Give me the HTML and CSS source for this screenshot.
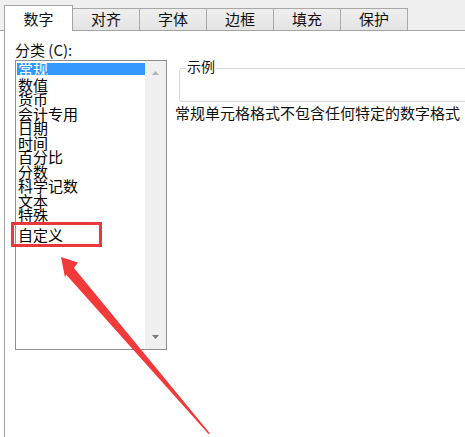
FILE: index.html
```html
<!DOCTYPE html>
<html lang="zh-CN">
<head>
<meta charset="utf-8">
<title>设置单元格格式</title>
<link rel="stylesheet" href="styles.css">
</head>
<body>
<div class="window">
  <div class="tabbar">
    <div class="tab active">数字</div>
    <div class="tab">对齐</div>
    <div class="tab">字体</div>
    <div class="tab">边框</div>
    <div class="tab">填充</div>
    <div class="tab">保护</div>
  </div>
  <div class="panel">
    <div class="left">
      <div class="label">分类 (C):</div>
      <div class="listbox">
        <ul class="items">
          <li class="sel">常规</li>
          <li>数值</li>
          <li>货币</li>
          <li>会计专用</li>
          <li>日期</li>
          <li>时间</li>
          <li>百分比</li>
          <li>分数</li>
          <li>科学记数</li>
          <li>文本</li>
          <li>特殊</li>
          <li class="last">自定义</li>
        </ul>
        <div class="scrollbar">
          <div class="sb-btn"><svg width="7" height="4" viewBox="0 0 7 4"><path d="M0 4 L3.5 0 L7 4 Z" fill="#b4b4b4"/></svg></div>
          <div class="sb-btn"><svg width="7" height="4" viewBox="0 0 7 4"><path d="M0 0 L7 0 L3.5 4 Z" fill="#7a7a7a"/></svg></div>
        </div>
      </div>
    </div>
    <div class="right">
      <fieldset class="sample">
        <legend>示例</legend>
        <div class="sample-body"></div>
      </fieldset>
      <p class="desc">常规单元格格式不包含任何特定的数字格式</p>
    </div>
  </div>
  <div class="mark-box"></div>
  <svg class="arrow" width="465" height="437" viewBox="0 0 465 437">
    <polygon points="61,257 78,262.5 74,268 210,433.5 208.5,434 66,274.5 65,277.5" fill="#f23a3a"/>
  </svg>
</div>
</body>
</html>
```

FILE: styles.css
```css
html, body {
  margin: 0;
  padding: 0;
  background: #ffffff;
}

body {
  width: 465px;
  height: 437px;
  overflow: hidden;
  font-family: "Noto Sans CJK SC", "Noto Sans", sans-serif;
  font-size: 15px;
  color: #111;
}

.window {
  position: relative;
  width: 465px;
  height: 437px;
  overflow: hidden;
  background: #fff;
}

/* Tabs */
.tabbar {
  display: flex;
  align-items: flex-end;
  height: 31px;
  box-sizing: border-box;
  padding-left: 4px;
  background: #f0f0f0;
  border-bottom: 1px solid #a4a4a4;
}

.tab {
  box-sizing: border-box;
  width: 67px;
  height: 22px;
  line-height: 20px;
  text-align: center;
  background: linear-gradient(#efefef, #e4e4e4);
  border-top: 1px solid #a8a8a8;
  border-right: 1px solid #a8a8a8;
  color: #111;
}

.tab.active {
  width: 69px;
  height: 26px;
  line-height: 25px;
  margin-bottom: -1px;
  background: #fff;
  border: 1px solid #a4a4a4;
  border-bottom: none;
}

/* Panel */
.panel {
  display: flex;
  gap: 8px;
  margin-left: 4px;
  height: 406px;
  box-sizing: border-box;
  padding: 11px 0 0 10px;
  border-left: 1px solid #a4a4a4;
  background: #fff;
}

.left {
  display: flex;
  flex-direction: column;
  width: 152px;
  flex: none;
}

.label {
  line-height: 15px;
  height: 15px;
  margin-bottom: 3px;
  white-space: nowrap;
}

.listbox {
  display: flex;
  height: 290px;
  box-sizing: border-box;
  border: 1px solid #8f8f8f;
  background: #fff;
}

.items {
  list-style: none;
  margin: 0;
  padding: 2px 0 0 1px;
  width: 129px;
  box-sizing: border-box;
  flex: none;
}

.items li {
  height: 14.5px;
  line-height: 14.5px;
  padding-left: 1px;
  white-space: nowrap;
  color: #000;
}

.items li.sel {
  height: 12px;
  line-height: 12px;
  margin-bottom: 2.5px;
  background: #3399ff;
  color: #fff;
}

.items li.last {
  margin-top: 5.25px;
}

.scrollbar {
  display: flex;
  flex-direction: column;
  justify-content: space-between;
  width: 21px;
  flex: none;
  background: #f0f0f0;
}

.sb-btn {
  height: 24px;
  display: flex;
  align-items: center;
  justify-content: center;
}

/* Right column */
.right {
  display: flex;
  flex-direction: column;
  flex: none;
  width: 300px;
}

.sample {
  margin: 18px 0 0 4px;
  padding: 0 0 0 6px;
  width: 300px;
  min-width: 0;
  border: 1px solid #d6d6d6;
  border-radius: 3px;
}

.sample legend {
  padding: 0 1px 3px 1px;
  font-size: 14px;
  line-height: 13px;
  color: #111;
}

.sample-body {
  height: 25px;
}

.desc {
  margin: 3px 0 0 0;
  line-height: 15px;
  white-space: nowrap;
  color: #111;
}

/* Annotations overlaid on the screenshot */
.mark-box {
  position: absolute;
  left: 11px;
  top: 222px;
  width: 91px;
  height: 25px;
  box-sizing: border-box;
  border: 3px solid #e8383d;
}

.arrow {
  position: absolute;
  left: 0;
  top: 0;
  pointer-events: none;
}
```
